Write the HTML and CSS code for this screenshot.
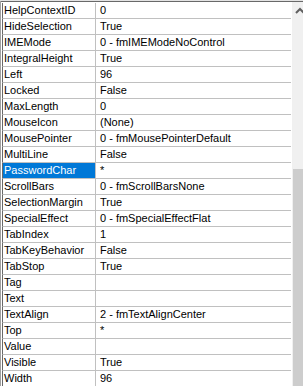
FILE: index.html
```html
<!DOCTYPE html>
<html lang="en">
<head>
    <meta charset="UTF-8">
    <title>Properties</title>
    <link rel="stylesheet" href="styles.css">
</head>
<body>

    <div class="window">
        <div class="grid">
            <div class="row"><div class="name">HelpContextID</div><div class="value">0</div></div>
            <div class="row"><div class="name">HideSelection</div><div class="value">True</div></div>
            <div class="row"><div class="name">IMEMode</div><div class="value">0 - fmIMEModeNoControl</div></div>
            <div class="row"><div class="name">IntegralHeight</div><div class="value">True</div></div>
            <div class="row"><div class="name">Left</div><div class="value">96</div></div>
            <div class="row"><div class="name">Locked</div><div class="value">False</div></div>
            <div class="row"><div class="name">MaxLength</div><div class="value">0</div></div>
            <div class="row"><div class="name">MouseIcon</div><div class="value">(None)</div></div>
            <div class="row"><div class="name">MousePointer</div><div class="value">0 - fmMousePointerDefault</div></div>
            <div class="row"><div class="name">MultiLine</div><div class="value">False</div></div>
            <div class="row selected"><div class="name">PasswordChar</div><div class="value">*</div></div>
            <div class="row"><div class="name">ScrollBars</div><div class="value">0 - fmScrollBarsNone</div></div>
            <div class="row"><div class="name">SelectionMargin</div><div class="value">True</div></div>
            <div class="row"><div class="name">SpecialEffect</div><div class="value">0 - fmSpecialEffectFlat</div></div>
            <div class="row"><div class="name">TabIndex</div><div class="value">1</div></div>
            <div class="row"><div class="name">TabKeyBehavior</div><div class="value">False</div></div>
            <div class="row"><div class="name">TabStop</div><div class="value">True</div></div>
            <div class="row"><div class="name">Tag</div><div class="value"></div></div>
            <div class="row"><div class="name">Text</div><div class="value"></div></div>
            <div class="row"><div class="name">TextAlign</div><div class="value">2 - fmTextAlignCenter</div></div>
            <div class="row"><div class="name">Top</div><div class="value">*</div></div>
            <div class="row"><div class="name">Value</div><div class="value"></div></div>
            <div class="row"><div class="name">Visible</div><div class="value">True</div></div>
            <div class="row"><div class="name">Width</div><div class="value">96</div></div>
        </div>

        <div class="scrollbar">
            <div class="arrow-up">
                <svg width="17" height="17" viewBox="0 0 17 17">
                    <polyline points="4,11 8,7 12,11" fill="none" stroke="#606060" stroke-width="2"/>
                </svg>
            </div>
            <div class="track">
                <div class="thumb"></div>
            </div>
        </div>
    </div>

</body>
</html>
```

FILE: styles.css
```css
body {
    margin: 0;
    padding: 0;
    width: 303px;
    height: 386px;
    overflow: hidden;
    background-color: #ffffff;
    font-family: "Liberation Sans", Arial, sans-serif;
    font-size: 11px;
    color: #000000;
}

.window {
    display: flex;
    width: 309px;
    height: 386px;
    border-top: 1px solid #e3e3e3;
    box-shadow: inset 0 1px 0 #696969;
    box-sizing: border-box;
}

.grid {
    width: 289px;
    padding-top: 2px;
    border-left: 1px solid #a0a0a0;
    padding-left: 1px;
    margin-right: 1px;
}

.row {
    display: flex;
    height: 15px;
    line-height: 15px;
    border-bottom: 1px solid #c0c0c0;
    border-left: 1px solid #696969;
    white-space: nowrap;
}

.name {
    width: 91px;
    padding-left: 1px;
    border-right: 1px solid #c0c0c0;
}

.value {
    flex: 1;
    padding-left: 4px;
    overflow: hidden;
}

.row.selected .name {
    background-color: #0078d7;
    color: #ffffff;
}

.scrollbar {
    width: 17px;
    margin-top: 1px;
    display: flex;
    flex-direction: column;
    background-color: #f0f0f0;
}

.arrow-up {
    height: 17px;
}

.arrow-up svg {
    display: block;
}

.track {
    flex: 1;
    display: flex;
    flex-direction: column;
    justify-content: flex-end;
}

.thumb {
    height: 217px;
    margin: 0 1px;
    background-color: #cdcdcd;
}
```
